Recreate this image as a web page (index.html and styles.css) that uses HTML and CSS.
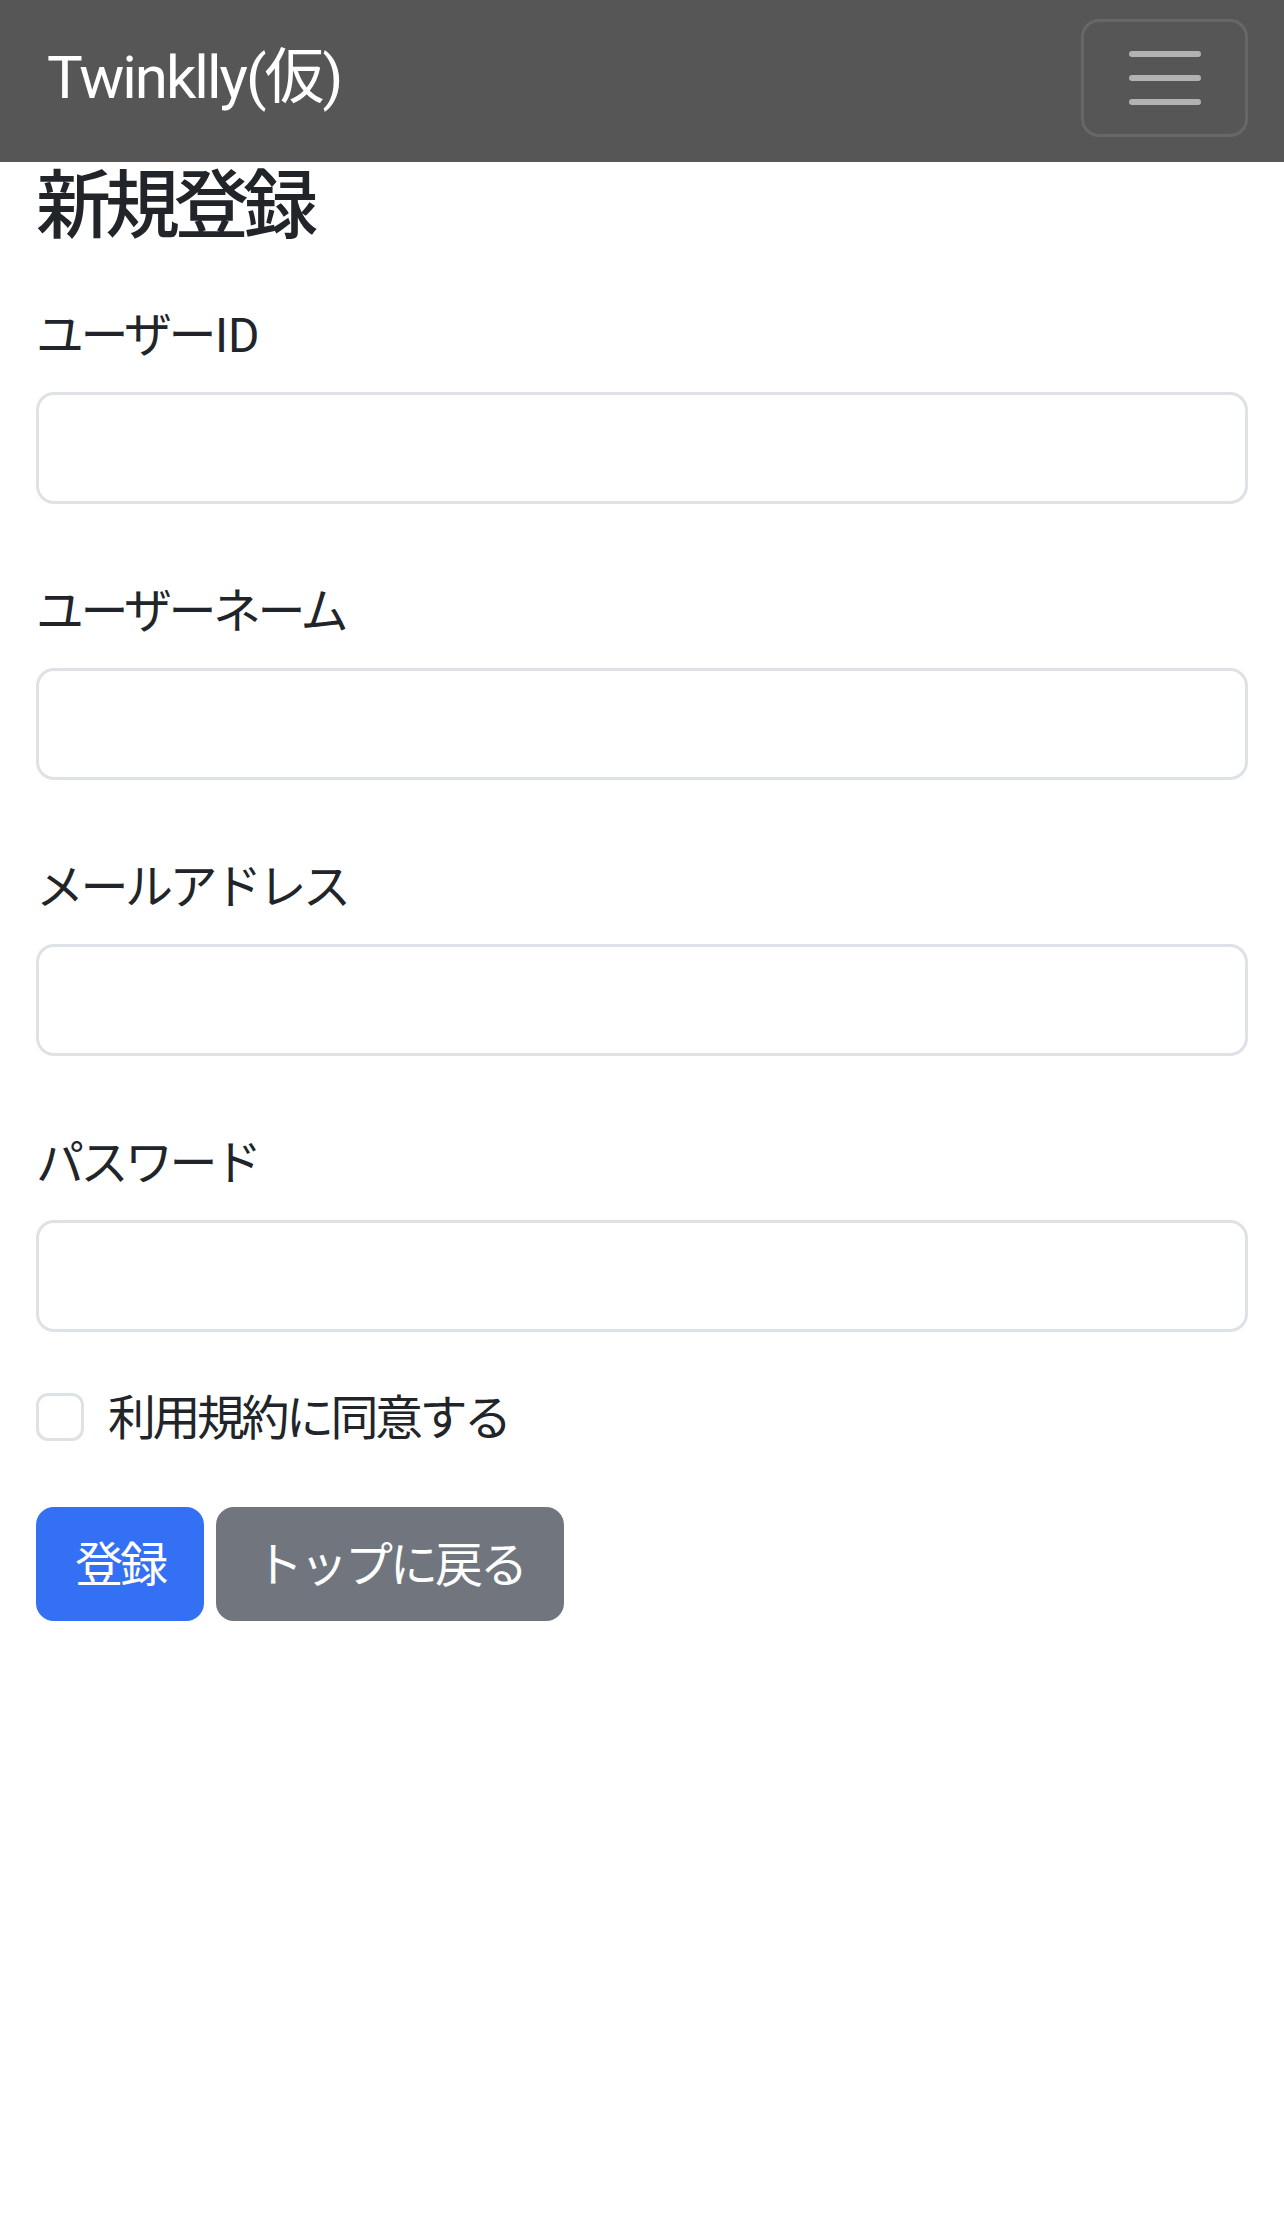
FILE: index.html
```html
<!DOCTYPE html>
<html lang="ja">
<head>
<meta charset="utf-8">
<title>新規登録 - Twinklly(仮)</title>
<link rel="stylesheet" href="styles.css">
</head>
<body>
<nav class="navbar">
  <a class="brand" href="#">Twinklly(仮)</a>
  <button class="toggler" type="button" aria-label="menu">
    <svg class="toggler-icon" viewBox="0 0 30 30" width="90" height="90"><path d="M4 7h22M4 15h22M4 23h22" stroke="rgba(255,255,255,0.55)" stroke-width="2" stroke-linecap="round" fill="none"/></svg>
  </button>
</nav>
<main class="container">
  <h2 class="title">新規登録</h2>
  <form class="form">
    <div class="field">
      <label class="label">ユーザー<span class="latin">ID</span></label>
      <input class="input" type="text">
    </div>
    <div class="field">
      <label class="label">ユーザーネーム</label>
      <input class="input" type="text">
    </div>
    <div class="field">
      <label class="label">メールアドレス</label>
      <input class="input" type="email">
    </div>
    <div class="field field-last">
      <label class="label">パスワード</label>
      <input class="input" type="password">
    </div>
    <div class="check">
      <input class="check-input" type="checkbox" id="agree">
      <label class="check-label" for="agree">利用規約に同意する</label>
    </div>
    <div class="actions">
      <button class="btn btn-primary" type="submit">登録</button>
      <button class="btn btn-secondary" type="button">トップに戻る</button>
    </div>
  </form>
</main>
</body>
</html>
```
FILE: styles.css
```css
* { box-sizing: border-box; }

html, body {
  margin: 0;
  padding: 0;
  background: #ffffff;
}

body {
  font-family: "Noto Sans CJK JP", sans-serif;
  font-size: 48px;
  line-height: 72px;
  color: #212529;
  letter-spacing: -3.5px;
}

.navbar {
  display: flex;
  align-items: center;
  justify-content: space-between;
  height: 162px;
  padding: 19px 36px 25px 36px;
  background: #565656;
}

.brand {
  padding-left: 11px;
  font-family: Roboto, "Noto Sans CJK JP", sans-serif;
  font-size: 60px;
  line-height: 90px;
  letter-spacing: -2px;
  color: #ffffff;
  text-decoration: none;
}

.toggler {
  display: flex;
  align-items: center;
  justify-content: center;
  width: 167px;
  height: 118px;
  padding: 11px 36px;
  background: transparent;
  border: 3px solid rgba(255, 255, 255, 0.1);
  border-radius: 18px;
}

.toggler-icon {
  display: block;
  width: 90px;
  height: 90px;
  flex: none;
}

.container {
  padding: 0 36px;
}

.title {
  margin: 0;
  font-family: "Noto Sans CJK JP", sans-serif;
  font-size: 75px;
  line-height: 75px;
  font-weight: 500;
  letter-spacing: -6px;
  color: #212529;
}

.form {
  margin: 0;
  padding-top: 58px;
}

.field {
  margin-bottom: 67px;
}

.field-last {
  margin-bottom: 49px;
}

.label {
  display: block;
  margin-bottom: 25px;
  line-height: 72px;
}

.latin {
  font-family: Roboto, sans-serif;
  line-height: 1;
  letter-spacing: 0;
  padding-left: 2px;
}

.input {
  display: block;
  width: 100%;
  height: 112px;
  margin: 0;
  padding: 17px 36px;
  font: inherit;
  background: #ffffff;
  border: 3px solid #dee2e6;
  border-radius: 18px;
  outline: none;
}

.check {
  display: flex;
  align-items: flex-start;
  height: 72px;
}

.check-input {
  appearance: none;
  -webkit-appearance: none;
  flex: none;
  width: 48px;
  height: 48px;
  margin: 12px 24px 0 0;
  background: #ffffff;
  border: 3px solid #dee2e6;
  border-radius: 12px;
}

.check-label {
  line-height: 66px;
}

.actions {
  display: flex;
  gap: 12px;
  margin-top: 54px;
}

.btn {
  height: 114px;
  padding: 15px 36px 21px;
  font-family: "Noto Sans CJK JP", sans-serif;
  font-size: 48px;
  letter-spacing: -3px;
  line-height: 72px;
  color: #ffffff;
  border: 3px solid transparent;
  border-radius: 18px;
}

.btn-primary {
  background: #3470f3;
  border-color: #3470f3;
}

.btn-secondary {
  background: #71767e;
  border-color: #71767e;
}
```
